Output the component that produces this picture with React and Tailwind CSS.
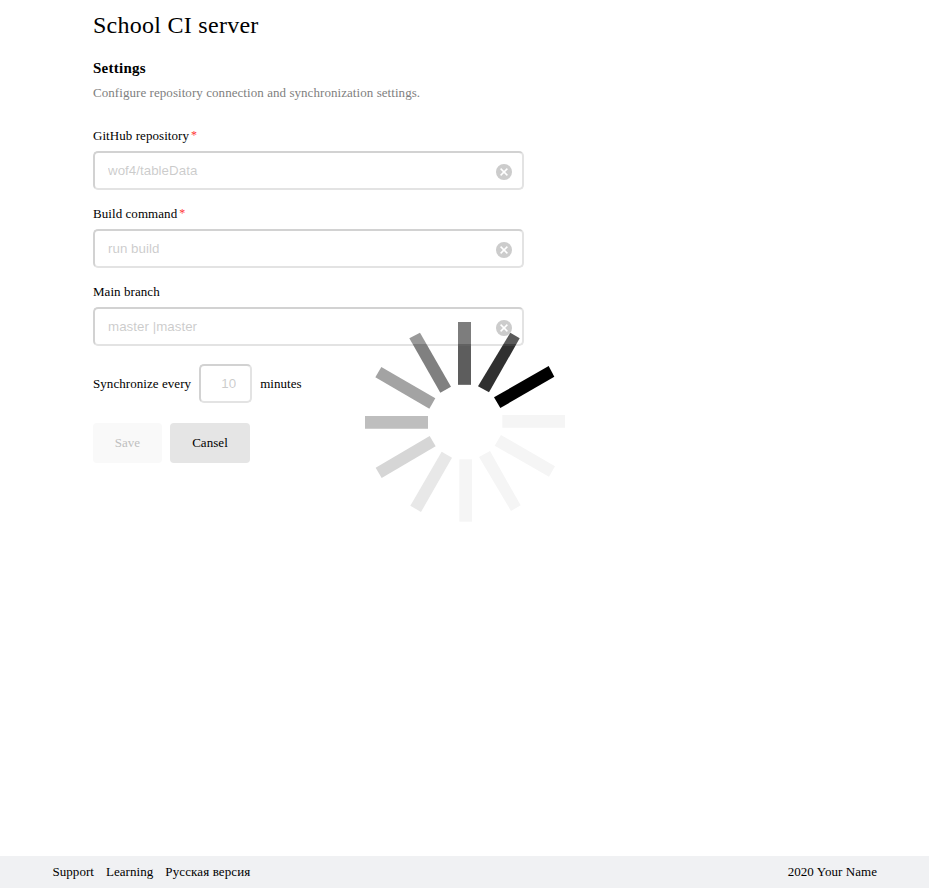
const BARS = [
  ["324,66 363,66 363,254.5 324,254.5", "#5d5d5d"],
  ["481,98 509,115 417,277 384,259", "#303030"],
  ["596,198 613,230 451,324 432,292", "#000000"],
  ["457,345 645,345 645,383 457,383", "#f5f5f5"],
  ["453,405 615,499 597,530 434,437", "#f5f5f5"],
  ["420,453 512,616 483,633 387,471", "#f5f5f5"],
  ["328,478 366,478 366,665 328,665", "#f5f5f5"],
  ["275,455 306,473 213,636 181,617", "#e8e8e8"],
  ["239,408 257,439 95,534 77,503", "#d6d6d6"],
  ["45,348 234,348 234,386.5 45,386.5", "#bebebe"],
  ["94,201 256,295 238,326 76,232", "#a3a3a3"],
  ["210,98 303,260 271,278 178,115", "#808080"],
];

function Spinner() {
  return (
    <svg className="absolute left-[350px] top-[300px] z-10" width="230" height="230" viewBox="0 0 690 690">
      {BARS.map(([points, fill]) => (
        <polygon key={points} points={points} fill={fill} />
      ))}
    </svg>
  );
}

const INPUT =
  "relative z-20 block h-[39px] rounded-[5px] border-2 border-t-[#262626] border-l-[#262626] border-r-[#767676] border-b-[#767676] bg-white text-[13.33px] tracking-[0.03px] text-black opacity-20 font-['Liberation_Sans',Arial,sans-serif]";

function Field({ label, value, required }) {
  return (
    <div className="mb-[16px]">
      <label className="flex h-[15px] items-center gap-[2px] text-[13px] leading-[15px] tracking-[0.06px]">
        {label}
        {required && <span className="text-[12px] text-[#ff3333]">*</span>}
      </label>
      <div className="relative mt-2 w-[431px]">
        <svg className="absolute right-3 top-[13px]" width="16" height="16" viewBox="0 0 16 16">
          <circle cx="8" cy="8" r="8" fill="#bfbfbf" />
          <path d="M4.6 4.6l6.8 6.8M11.4 4.6l-6.8 6.8" stroke="#fff" strokeWidth="1.5" />
        </svg>
        <input className={`${INPUT} w-full pl-[13px] pb-px`} defaultValue={value} />
      </div>
    </div>
  );
}

export default function App() {
  return (
    <div className="relative flex h-[888px] flex-col bg-white text-black font-['Liberation_Serif','Times_New_Roman',serif]">
      <main className="flex-1 pl-[93px] pt-[11px]">
        <h1 className="text-[24px] leading-7 tracking-[0.27px]">School CI server</h1>
        <h2 className="mt-5 text-[15px] font-bold leading-[18px] tracking-[0.25px]">Settings</h2>
        <p className="mb-[28px] mt-2 text-[13px] leading-[15px] tracking-[0.06px] text-[#808080]">
          Configure repository connection and synchronization settings.
        </p>
        <Field label="GitHub repository" value="wof4/tableData" required />
        <Field label="Build command" value="run build" required />
        <Field label="Main branch" value="master |master" />
        <div className="mt-[18px] flex items-center text-[13px] tracking-[0.06px]">
          <span>Synchronize every</span>
          <input className={`${INPUT} mx-2 w-[53px] pb-px pr-[14px] text-right`} defaultValue="10" />
          <span>minutes</span>
        </div>
        <div className="mt-5 flex gap-2 text-[13px]">
          <button className="h-10 w-[69px] rounded bg-[#f9f9f9] text-[#bfbfbf]">Save</button>
          <button className="h-10 w-20 rounded bg-[#e5e5e5] tracking-[0.06px]">Cansel</button>
        </div>
      </main>
      <footer className="flex h-8 items-center justify-between bg-[#f0f1f3] pl-[52.5px] pr-[52px] text-[13px]">
        <nav className="flex gap-[12px]">
          <a className="tracking-[0.04px]">Support</a>
          <a className="tracking-[0.06px]">Learning</a>
          <a className="tracking-[0.11px]">Русская версия</a>
        </nav>
        <span className="tracking-[0.06px]">2020 Your Name</span>
      </footer>
      <Spinner />
    </div>
  );
}
